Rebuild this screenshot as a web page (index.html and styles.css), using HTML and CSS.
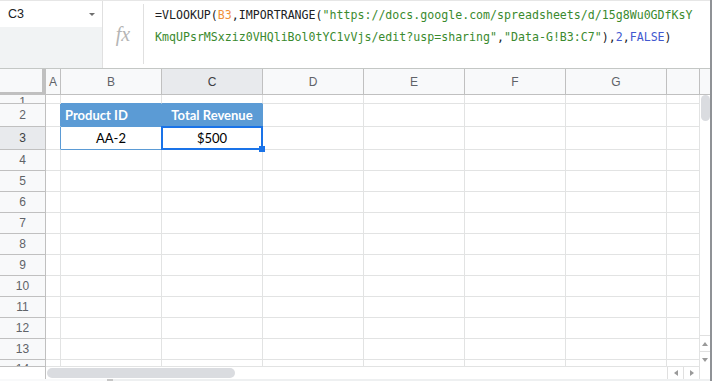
FILE: index.html
```html
<!DOCTYPE html>
<html lang="en">
<head>
  <meta charset="UTF-8" />
  <meta name="viewport" content="width=device-width, initial-scale=1.0"/>
  <title>Sheet</title>
  <link rel="stylesheet" href="styles.css">
</head>
<body>
  <div class="app">
    <div class="toolbar">
      <div class="namebox">
        <div class="namebox-field">
          <span>C3</span>
          <span class="caret"></span>
        </div>
      </div>
      <div class="fx">fx</div>
      <div class="formula">
        <div class="line">=VLOOKUP(<span class="ref">B3</span>,IMPORTRANGE(<span class="str">"https://docs.google.com/spreadsheets/d/15g8Wu0GDfKsY</span></div>
        <div class="line"><span class="str">KmqUPsrMSxziz0VHQliBol0tYC1vVjs/edit?usp=sharing"</span>,<span class="str">"Data-G!B3:C7"</span>),<span class="num">2</span>,<span class="num">FALSE</span>)</div>
      </div>
    </div>

    <div class="sheet">
      <div class="grid" id="grid"></div>
      <div class="vscroll">
        <div class="vs-head"></div>
        <div class="vs-track"><div class="vs-thumb"></div></div>
        <div class="vs-btn"><span class="tri up"></span></div>
        <div class="vs-btn"><span class="tri down"></span></div>
      </div>
    </div>

    <div class="hscroll">
      <div class="hs-gutter"></div>
      <div class="hs-track"><div class="hs-thumb"></div></div>
      <div class="hs-btn"><span class="tri left"></span></div>
      <div class="hs-btn"><span class="tri right"></span></div>
      <div class="hs-corner"></div>
    </div>

    <div class="tabs">
      <div class="tabs-blank"></div>
      <div class="tabs-edge"></div>
    </div>
  </div>

  <script>
    const cols = ["A", "B", "C", "D", "E", "F", "G", ""];
    const cells = {
      B2: { text: "Product ID", cls: "th" },
      C2: { text: "Total Revenue", cls: "th center" },
      B3: { text: "AA-2", cls: "td center" },
      C3: { text: "$500", cls: "td center selected" }
    };
    const grid = document.getElementById("grid");

    function addCell(cls, text) {
      const div = document.createElement("div");
      div.className = "cell " + cls;
      if (text) div.textContent = text;
      grid.appendChild(div);
      return div;
    }

    addCell("corner");
    cols.forEach(c => addCell("col-head" + (c === "C" ? " active" : ""), c));

    for (let r = 1; r <= 14; r++) {
      let headCls = "row-head";
      if (r === 3) headCls += " active";
      if (r === 1) headCls += " cut-top";
      if (r === 14) headCls += " cut-bottom";
      addCell(headCls, String(r));

      cols.forEach(c => {
        const info = cells[c + r];
        let cls = info ? info.cls : "";
        // outline of the B2:C3 table
        if (r === 1 && (c === "B" || c === "C")) cls += " tbl-above";
        if (c === "A" && (r === 2 || r === 3)) cls += " tbl-left";
        if (r === 3 && (c === "B" || c === "C")) cls += " tbl-bottom";
        if (c === "C" && (r === 2 || r === 3)) cls += " tbl-right";
        const cell = addCell(cls, info && info.text);
        if (info && info.cls.includes("selected")) {
          const box = document.createElement("div");
          box.className = "sel-box";
          box.innerHTML = '<div class="handle"></div>';
          cell.appendChild(box);
        }
      });
    }
  </script>
</body>
</html>
```

FILE: styles.css
```css
* {
  box-sizing: border-box;
}
body {
  margin: 0;
  background: #fff;
  font-family: "Liberation Sans", Arial, sans-serif;
}
.app {
  width: 712px;
  height: 381px;
  overflow: hidden;
  border-right: 2px solid #8f9296;
}

/* formula bar */
.toolbar {
  display: flex;
  height: 69px;
  border-top: 1px solid #e6e6e6;
  border-bottom: 1px solid #c4c7c5;
}
.namebox {
  width: 103px;
  background: #f1f3f4;
  border-right: 1px solid #e0e0e0;
}
.namebox-field {
  height: 26px;
  background: #fff;
  display: flex;
  align-items: center;
  justify-content: space-between;
  padding: 0 7px 0 8px;
  font-size: 12.5px;
  color: #202124;
}
.caret {
  width: 0;
  height: 0;
  border-left: 3px solid transparent;
  border-right: 3px solid transparent;
  border-top: 3px solid #6f6f6f;
}
.fx {
  width: 40px;
  display: flex;
  align-items: center;
  justify-content: center;
  font-family: "Liberation Serif", serif;
  font-style: italic;
  font-size: 20px;
  color: #b5b5b5;
}
.formula {
  flex: 1;
  margin: 3px 0 4px;
  padding-left: 11px;
  border-left: 1px solid #e0e0e0;
  font-family: "DejaVu Sans Mono", "Liberation Mono", monospace;
  font-size: 11.6px;
  line-height: 22px;
  color: #202124;
}
.line {
  white-space: nowrap;
}
.ref {
  color: #f0913a;
}
.str {
  color: #3a8a2e;
}
.num {
  color: #4259cf;
}

/* grid */
.sheet {
  display: flex;
  height: 298px;
}
.grid {
  display: grid;
  grid-template-columns: 46px 15px repeat(6, 101px) 33px;
  grid-template-rows: 26px 9px 23px 23px repeat(10, 21px) 7px;
}
.cell {
  border-right: 1px solid #e2e3e3;
  border-bottom: 1px solid #e2e3e3;
  overflow: hidden;
  white-space: nowrap;
  display: flex;
  align-items: center;
  font-family: Lato, "Liberation Sans", sans-serif;
  font-size: 13px;
  color: #000;
}
.corner {
  background: #f8f9fa;
  border-right: 4px solid #c0c0c0;
  border-bottom: 3px solid #c0c0c0;
}
.col-head,
.row-head {
  background: #f8f9fa;
  border-color: #c0c0c0;
  justify-content: center;
  font-family: "Liberation Sans", Arial, sans-serif;
  font-size: 12px;
  color: #5f6368;
}
.col-head.active,
.row-head.active {
  background: #e8eaed;
  color: #3c4043;
}
.row-head.cut-top {
  align-items: flex-start;
  line-height: 14px;
}
.row-head.cut-bottom {
  align-items: flex-start;
  line-height: 18px;
}
.th {
  background: #5b9bd5;
  color: #fff;
  font-weight: bold;
  padding: 0 4px;
  border-right-color: #5b9bd5;
  border-bottom-color: #5b9bd5;
}
.center {
  justify-content: center;
}
.tbl-above {
  border-bottom-color: #5b9bd5;
}
.tbl-left {
  border-right-color: #5b9bd5;
}
.tbl-bottom {
  border-bottom-color: #5b9bd5;
}
.tbl-right {
  border-right-color: #5b9bd5;
}
.selected {
  position: relative;
  overflow: visible;
  z-index: 1;
}
.sel-box {
  position: absolute;
  top: -1px;
  left: -1px;
  width: 102px;
  height: 24px;
  border: 2px solid #1a73e8;
}
.handle {
  position: absolute;
  right: -4px;
  bottom: -4px;
  width: 6px;
  height: 6px;
  background: #1a73e8;
}

/* scrollbars */
.vscroll {
  width: 10px;
  display: flex;
  flex-direction: column;
}
.vs-head {
  height: 26px;
  background: #f8f9fa;
  border-bottom: 1px solid #c0c0c0;
}
.vs-track {
  flex: 1;
  padding: 0 0 0 1px;
}
.vs-thumb {
  width: 9px;
  height: 26px;
  border-radius: 5px;
  background: #dadce0;
}
.vs-btn {
  height: 16px;
  border-top: 1px solid #e0e0e0;
  display: flex;
  align-items: center;
  justify-content: center;
}
.vs-btn:first-of-type {
  height: 17px;
}
.tri {
  width: 0;
  height: 0;
}
.tri.up {
  border-left: 3px solid transparent;
  border-right: 3px solid transparent;
  border-bottom: 4px solid #9a9a9a;
}
.tri.down {
  border-left: 3px solid transparent;
  border-right: 3px solid transparent;
  border-top: 4px solid #9a9a9a;
}
.tri.left {
  border-top: 3px solid transparent;
  border-bottom: 3px solid transparent;
  border-right: 4px solid #9a9a9a;
}
.tri.right {
  border-top: 3px solid transparent;
  border-bottom: 3px solid transparent;
  border-left: 4px solid #9a9a9a;
}
.hscroll {
  display: flex;
  height: 12px;
}
.hs-gutter {
  width: 46px;
  border-right: 1px solid #c0c0c0;
}
.hs-track {
  flex: 1;
  padding: 1px 0 0 1px;
}
.hs-thumb {
  width: 188px;
  height: 10px;
  border-radius: 5px;
  background: #dadce0;
}
.hs-btn {
  width: 16px;
  border-left: 1px solid #e0e0e0;
  display: flex;
  align-items: center;
  justify-content: center;
}
.hs-corner {
  width: 11px;
  border-left: 1px solid #e0e0e0;
}
.tabs {
  display: flex;
  height: 2px;
  background: #eef0f1;
}
.tabs-blank {
  width: 107px;
  background: #f8f9fa;
}
.tabs-edge {
  width: 6px;
  background: #c6c6c6;
}
```
